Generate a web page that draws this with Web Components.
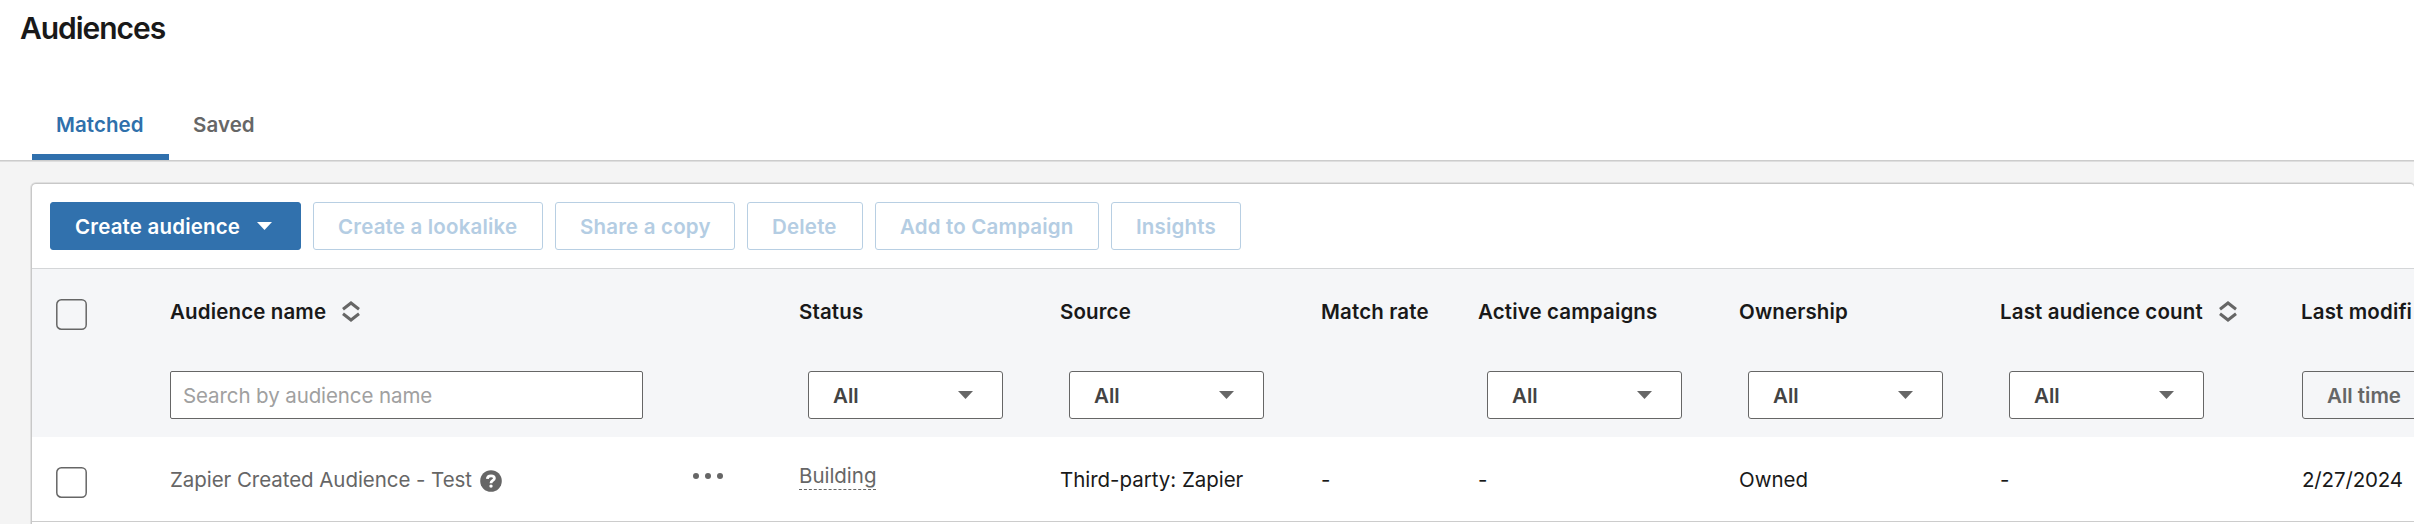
<!DOCTYPE html>
<html lang="en">
<head>
<meta charset="utf-8">
<title>Audiences</title>
<style>
    html, body { margin: 0; height: 100%; overflow: hidden; }
    body { background: #f4f4f4; font-family: Inter, "Liberation Sans", sans-serif; font-size: 20.5px; color: #191919; }
</style>
</head>
<body>
<audiences-page></audiences-page>

<script>
class PageTab extends HTMLElement {
    constructor() {
        super();
        this.attachShadow({mode:'open'});
        this.shadowRoot.innerHTML = `<style>
            :host { display: flex; box-sizing: border-box; height: 72px; padding: 24px 25px 0 24px; border-bottom: 6px solid transparent; color: #666; font-weight: 600; line-height: 26px; white-space: nowrap; letter-spacing: 0.08px; }
            :host([active]) { color: #2f70ab; border-color: #3070ad; }
        </style><slot></slot>`;
    }
}

class ActionButton extends HTMLElement {
    constructor() {
        super();
        this.attachShadow({mode:'open'});
        this.shadowRoot.innerHTML = `<style>
            :host { display: flex; box-sizing: border-box; height: 48px; align-items: center; padding: 0 0 0 24px; border: 1px solid #b8cfe3; border-radius: 3px; background: #fff; color: #b4cde3; font-weight: 600; white-space: nowrap; letter-spacing: 0.18px; }
            :host([primary]) { background: #3171ad; border-color: #3171ad; color: #fff; }
            svg { display: none; margin-left: 17px; }
            :host([primary]) svg { display: block; }
        </style><slot></slot><svg width="15" height="8"><path d="M0 0h15L7.5 8z" fill="#fff"/></svg>`;
    }
}

class FilterSelect extends HTMLElement {
    constructor() {
        super();
        this.attachShadow({mode:'open'});
        this.shadowRoot.innerHTML = `<style>
            :host { display: flex; box-sizing: border-box; width: 195px; height: 48px; align-items: center; justify-content: space-between; margin-left: 9px; padding: 0 29px 0 24px; border: 1px solid #666; border-radius: 3px; background: #fff; color: #434343; font-weight: 600; white-space: nowrap; }
            :host([plain]) { margin-left: 2px; background: transparent; color: #666; }
        </style><slot></slot><svg width="15" height="8"><path d="M0 0h15L7.5 8z" fill="#666"/></svg>`;
    }
}

class SearchField extends HTMLElement {
    constructor() {
        super();
        this.attachShadow({mode:'open'});
        this.shadowRoot.innerHTML = `<style>
            :host { display: flex; box-sizing: border-box; width: 473px; height: 48px; align-items: center; padding-left: 12px; border: 1px solid #666; border-radius: 2px; background: #fff; color: #a0a0a0; letter-spacing: -0.1px; }
        </style><slot></slot>`;
    }
}

class CheckBox extends HTMLElement {
    constructor() {
        super();
        this.attachShadow({mode:'open'});
        this.shadowRoot.innerHTML = `<style>
            :host { display: block; width: 31px; height: 31px; margin: 30px 0 0 24px; }
            svg { display: block; }
        </style><svg width="31" height="31"><rect x=".8" y=".8" width="29.4" height="29.4" rx="4.5" fill="none" stroke="#666" stroke-width="1.5"/></svg>`;
    }
}

class ColumnTitle extends HTMLElement {
    constructor() {
        super();
        this.attachShadow({mode:'open'});
        this.shadowRoot.innerHTML = `<style>
            :host { display: flex; height: 26px; margin-top: 30px; line-height: 26px; font-weight: 600; white-space: nowrap; letter-spacing: 0.14px; }
            svg { display: none; margin: 2px 0 0 16px; }
            :host([sortable]) svg { display: block; }
        </style><slot></slot><svg width="18" height="21" fill="none" stroke="#666" stroke-width="3"><path d="M1 8.2 9 2l8 6.2M1 12.8 9 19l8-6.2"/></svg>`;
    }
}

class HelpIcon extends HTMLElement {
    constructor() {
        super();
        this.attachShadow({mode:'open'});
        this.shadowRoot.innerHTML = `<style>
            :host { display: block; width: 22px; height: 22px; }
            svg { display: block; }
        </style><svg width="22" height="22"><circle cx="11" cy="11" r="10.8" fill="#666"/><path d="M7.3 8.8c.2-2.2 1.7-3 3.7-3 2.1 0 3.4.9 3.4 2.5 0 2.3-3.4 2-3.4 4.9" fill="none" stroke="#fff" stroke-width="2.8"/><circle cx="11" cy="16.1" r="1.7" fill="#fff"/></svg>`;
    }
}

class MoreMenu extends HTMLElement {
    constructor() {
        super();
        this.attachShadow({mode:'open'});
        this.shadowRoot.innerHTML = `<style>
            :host { display: block; height: 6px; }
            svg { display: block; }
        </style><svg width="30" height="6" fill="#666"><circle cx="3" cy="3" r="3"/><circle cx="15" cy="3" r="3"/><circle cx="27" cy="3" r="3"/></svg>`;
    }
}

// One line of the table; all rows share the same column tracks.
class TableRow extends HTMLElement {
    constructor() {
        super();
        this.attachShadow({mode:'open'});
        this.shadowRoot.innerHTML = `<style>
            :host { display: grid; box-sizing: border-box; grid-template-columns: 138px 629px 261px 261px 157px 261px 261px 300px 300px; align-items: start; }
        </style><slot></slot>`;
    }
}

class AudiencesPage extends HTMLElement {
    constructor() {
        super();
        this.attachShadow({mode:'open'});
        this.shadowRoot.innerHTML = `<style>
            :host { display: block; width: 2414px; height: 524px; overflow: hidden; }
            header { box-sizing: border-box; height: 161px; border-bottom: 1px solid #ccc; box-shadow: 0 1px 0 #dedede; background: #fff; }
            h1 { margin: 0; padding: 9px 0 0 20px; height: 79px; font-size: 30px; font-weight: 600; line-height: 39px; letter-spacing: -1.05px; }
            nav { display: flex; padding-left: 32px; }
            main { padding: 22px 0 0 31px; }
            .panel { box-sizing: border-box; width: 2383px; height: 341px; border: 1px solid #c8c8c8; border-width: 1px 0 0 1px; border-radius: 5px 4px 0 0; box-shadow: 0 0 0 1px #e0e0e0; background: #fff; overflow: hidden; }
            .toolbar { display: flex; gap: 12px; box-sizing: border-box; height: 85px; padding: 18px 0 0 18px; border-bottom: 1px solid #d4d6d8; }
            .titles { height: 102px; background: #f5f6f8; }
            .filters { height: 66px; background: #f5f6f8; }
            .record { height: 85px; border-bottom: 1px solid #ccc; line-height: 26px; white-space: nowrap; }
            .cell { padding-top: 30px; letter-spacing: -0.03px; }
            .name { display: flex; color: #666; }
            .name span { letter-spacing: -0.06px; }
            .name help-icon { margin: 3px 0 0 8px; }
            .name more-menu { margin: 6px 0 0 191px; }
            .status { display: flex; padding-top: 26px; color: #666; }
            .status span { border-bottom: 1.5px dashed #666; line-height: 26px; }
            .date { padding-left: 2px; letter-spacing: -0.15px; }
        </style>
        <header>
            <h1>Audiences</h1>
            <nav>
                <page-tab active style="width:137px">Matched</page-tab>
                <page-tab>Saved</page-tab>
            </nav>
        </header>
        <main>
            <div class="panel">
                <div class="toolbar">
                    <action-button primary style="width:251px">Create audience</action-button>
                    <action-button style="width:230px">Create a lookalike</action-button>
                    <action-button style="width:180px">Share a copy</action-button>
                    <action-button style="width:116px">Delete</action-button>
                    <action-button style="width:224px">Add to Campaign</action-button>
                    <action-button style="width:130px">Insights</action-button>
                </div>
                <table-row class="titles">
                    <check-box></check-box>
                    <column-title sortable>Audience name</column-title>
                    <column-title>Status</column-title>
                    <column-title>Source</column-title>
                    <column-title>Match rate</column-title>
                    <column-title>Active campaigns</column-title>
                    <column-title>Ownership</column-title>
                    <column-title sortable>Last audience count</column-title>
                    <column-title style="padding-left:1px">Last modifi</column-title>
                </table-row>
                <table-row class="filters">
                    <span></span>
                    <search-field>Search by audience name</search-field>
                    <filter-select>All</filter-select>
                    <filter-select>All</filter-select>
                    <span></span>
                    <filter-select>All</filter-select>
                    <filter-select>All</filter-select>
                    <filter-select>All</filter-select>
                    <filter-select plain>All time</filter-select>
                </table-row>
                <table-row class="record">
                    <check-box></check-box>
                    <div class="cell name"><span>Zapier Created Audience - Test</span><help-icon></help-icon><more-menu></more-menu></div>
                    <div class="cell status"><span>Building</span></div>
                    <div class="cell">Third-party: Zapier</div>
                    <div class="cell">-</div>
                    <div class="cell">-</div>
                    <div class="cell">Owned</div>
                    <div class="cell">-</div>
                    <div class="cell date">2/27/2024</div>
                </table-row>
            </div>
        </main>`;
    }
}

customElements.define("page-tab", PageTab);
customElements.define("action-button", ActionButton);
customElements.define("filter-select", FilterSelect);
customElements.define("search-field", SearchField);
customElements.define("check-box", CheckBox);
customElements.define("column-title", ColumnTitle);
customElements.define("help-icon", HelpIcon);
customElements.define("more-menu", MoreMenu);
customElements.define("table-row", TableRow);
customElements.define("audiences-page", AudiencesPage);
</script>
</body>
</html>
